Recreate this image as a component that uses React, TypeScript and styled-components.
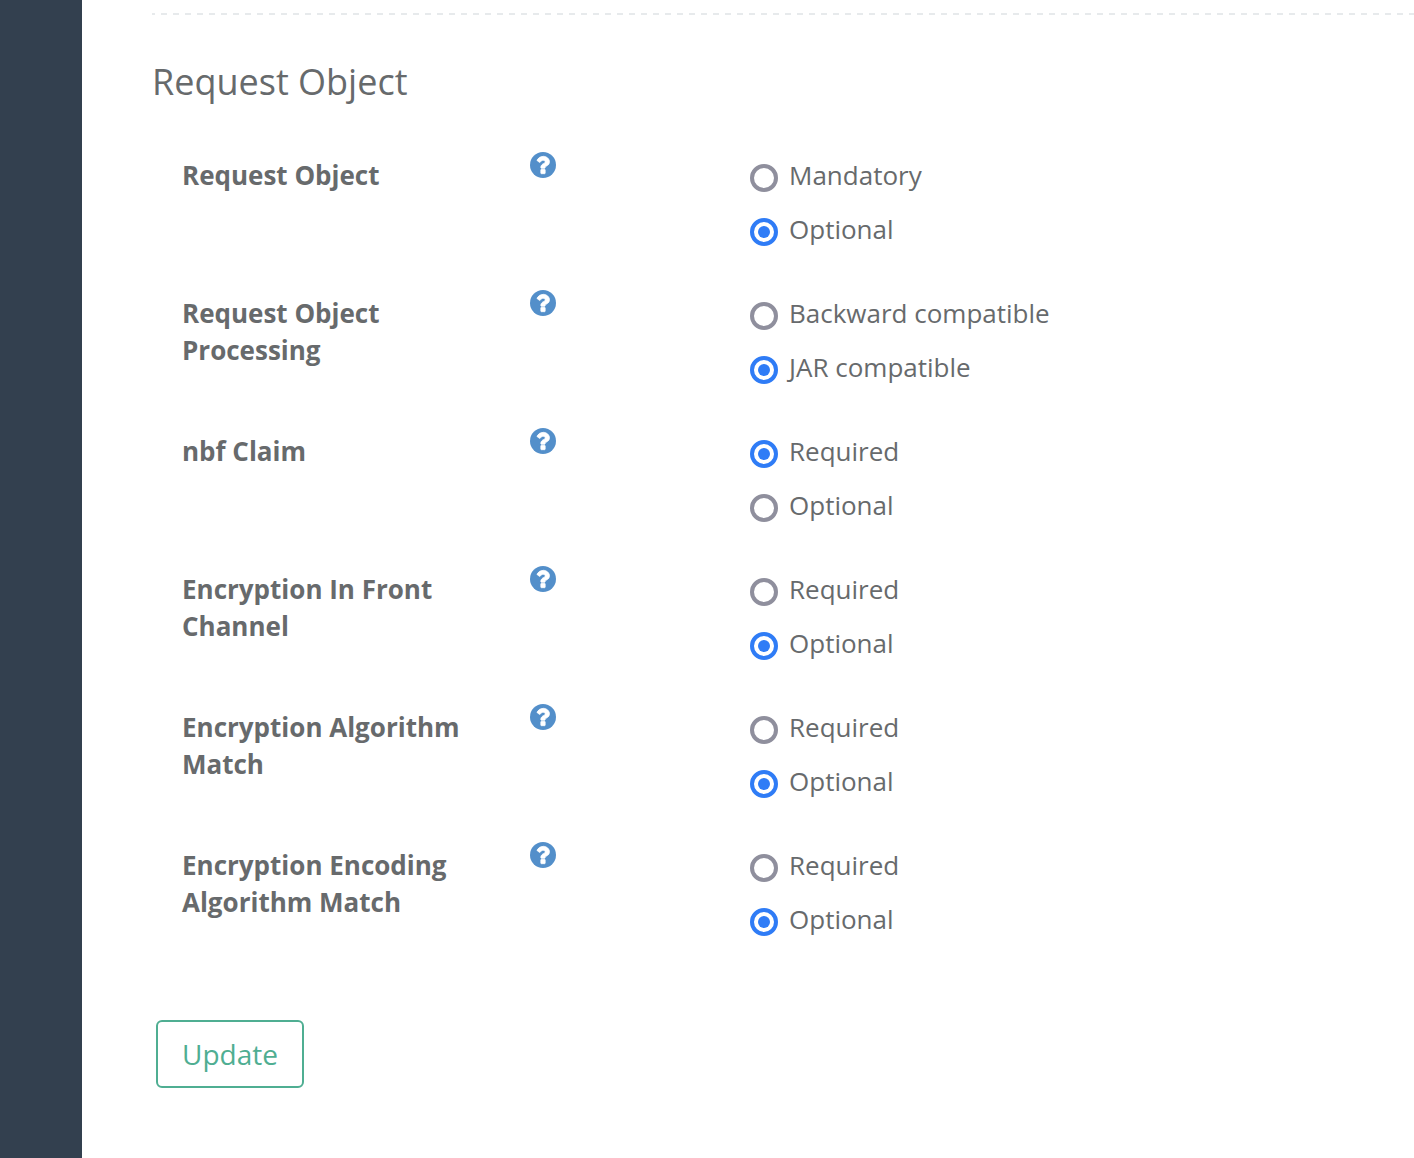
import React, { useId, useState } from "react";
import styled, { createGlobalStyle } from "styled-components";

const GlobalStyle = createGlobalStyle`
  *, *::before, *::after { box-sizing: border-box; }
  body {
    margin: 0;
    background: #ffffff;
    color: #676a6c;
    font-family: "Open Sans", "Noto Sans", sans-serif;
    font-size: 26px;
    line-height: 37px;
  }
`;

const Page = styled.div`
  display: flex;
  min-height: 100vh;
`;

const Sidebar = styled.aside`
  flex: 0 0 82px;
  background: #33404f;
`;

const Content = styled.main`
  flex: 1;
  min-width: 0;
  padding: 13px 0 70px 70px;
`;

const Divider = styled.hr`
  height: 2px;
  margin: 0;
  border: 0;
  background: repeating-linear-gradient(
    to right,
    #e7eaec 0 3px,
    transparent 3px 9px,
    #e7eaec 9px 12px
  );
`;

const Title = styled.h2`
  margin: 46px 0 0;
  font-size: 36px;
  line-height: 42px;
  font-weight: 400;
`;

const Form = styled.form`
  padding-top: 47px;
`;

const Row = styled.fieldset`
  display: grid;
  grid-template-columns: 288px 60px 220px 1fr;
  align-items: start;
  min-height: 138px;
  margin: 0;
  padding: 0 30px;
  border: 0;
`;

const RowLabel = styled.div`
  grid-column: 1;
  padding-top: 7px;
  font-weight: 700;
`;

const HelpButton = styled.button`
  grid-column: 3;
  justify-self: start;
  display: flex;
  margin: 2px 0 0;
  padding: 0;
  border: 0;
  background: none;
  color: #538fca;
  cursor: pointer;

  svg {
    width: 26px;
    height: 26px;
    fill: currentColor;
  }
`;

const Options = styled.div`
  grid-column: 4;
  display: flex;
  flex-direction: column;
  align-items: flex-start;
  gap: 17px;
  padding-top: 7px;
`;

const Option = styled.label`
  display: flex;
  align-items: center;
  gap: 11px;
`;

const Radio = styled.input`
  appearance: none;
  display: grid;
  place-items: center;
  width: 28px;
  height: 28px;
  margin: 4px 0 0;
  border: 4px solid #8f8f9d;
  border-radius: 50%;
  background: #ffffff;

  &:checked {
    border-color: #2f7cf6;
  }

  &:checked::before {
    content: "";
    width: 12px;
    height: 12px;
    border-radius: 50%;
    background: #2f7cf6;
  }
`;

const UpdateButton = styled.button`
  margin: 42px 4px 0;
  padding: 12px 24px;
  border: 2px solid #4fae92;
  border-radius: 6px;
  background: #ffffff;
  color: #4fae92;
  font-family: inherit;
  font-size: 28px;
  line-height: 40px;
  cursor: pointer;
`;

type Setting = { label: string; options: string[]; selected: string };

const settings: Setting[] = [
  { label: "Request Object", options: ["Mandatory", "Optional"], selected: "Optional" },
  {
    label: "Request Object Processing",
    options: ["Backward compatible", "JAR compatible"],
    selected: "JAR compatible",
  },
  { label: "nbf Claim", options: ["Required", "Optional"], selected: "Required" },
  { label: "Encryption In Front Channel", options: ["Required", "Optional"], selected: "Optional" },
  { label: "Encryption Algorithm Match", options: ["Required", "Optional"], selected: "Optional" },
  {
    label: "Encryption Encoding Algorithm Match",
    options: ["Required", "Optional"],
    selected: "Optional",
  },
];

function HelpIcon() {
  return (
    <svg viewBox="0 128 1536 1536" aria-hidden="true">
      <circle cx="768" cy="896" r="768" />
      <path
        fill="#ffffff"
        stroke="#ffffff"
        strokeWidth="44"
        d="M896 1376v-192q0-14-9-23t-23-9h-192q-14 0-23 9t-9 23v192q0 14 9 23t23 9h192q14 0 23-9t9-23zm256-672q0-88-55.500-163t-138.500-116-170-41q-243 0-371 213-15 24 8 42l132 100q7 6 19 6 16 0 25-12 53-68 86-92 34-24 86-24 48 0 85.500 26t37.500 59q0 38-20 61t-68 45q-63 28-115.500 86.500t-52.500 125.500v36q0 14 9 23t23 9h192q14 0 23-9t9-23q0-19 21.500-49.500t54.500-49.500q32-18 49-28.500t46-35 44.500-48 28-60.500 12.500-81z"
      />
    </svg>
  );
}

function SettingRow({ label, options, selected }: Setting) {
  const id = useId();
  const [value, setValue] = useState(selected);
  return (
    <Row aria-labelledby={id}>
      <RowLabel id={id}>{label}</RowLabel>
      <HelpButton type="button" aria-describedby={id}>
        <HelpIcon />
      </HelpButton>
      <Options>
        {options.map((option) => (
          <Option key={option}>
            <Radio
              type="radio"
              name={label}
              value={option}
              checked={value === option}
              onChange={() => setValue(option)}
            />
            {option}
          </Option>
        ))}
      </Options>
    </Row>
  );
}

export default function App() {
  return (
    <Page>
      <GlobalStyle />
      <Sidebar />
      <Content>
        <Divider />
        <Title>Request Object</Title>
        <Form onSubmit={(event) => event.preventDefault()}>
          {settings.map((setting) => (
            <SettingRow key={setting.label} {...setting} />
          ))}
          <UpdateButton type="submit">Update</UpdateButton>
        </Form>
      </Content>
    </Page>
  );
}
